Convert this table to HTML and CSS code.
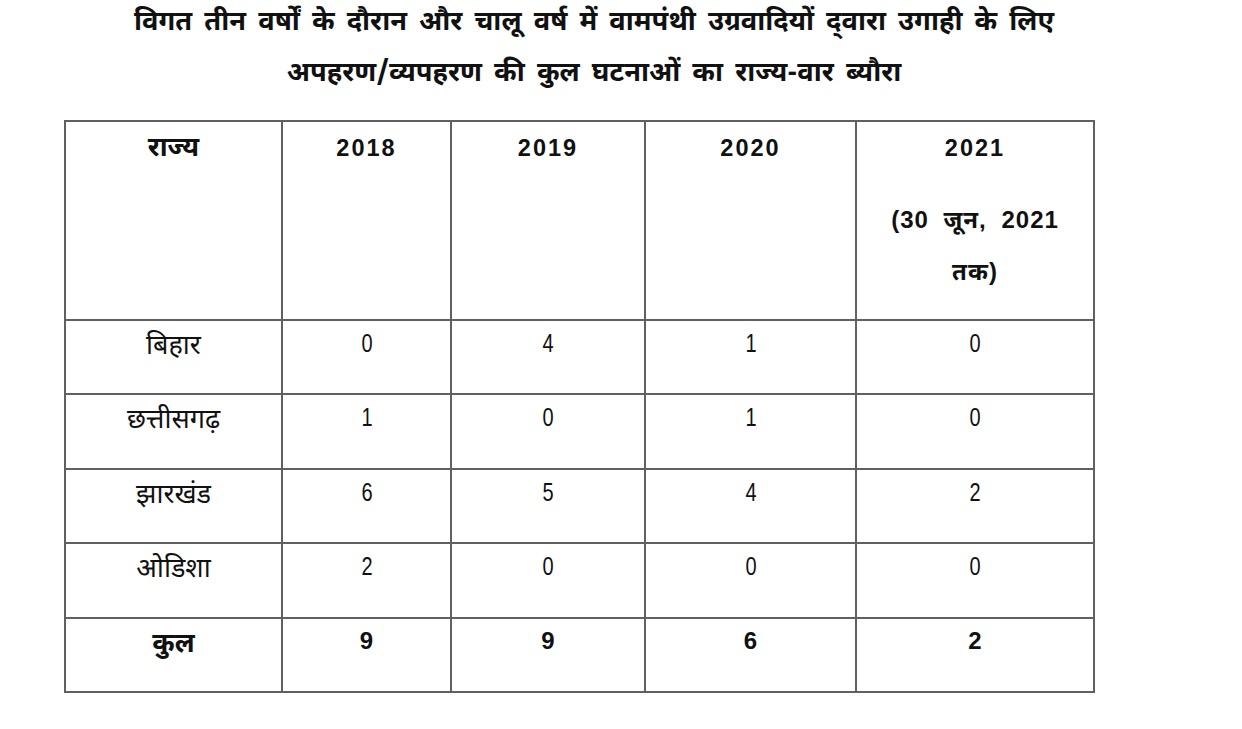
FILE: index.html
```html
<!DOCTYPE html>
<html lang="hi">
<head>
<meta charset="utf-8">
<title>राज्य-वार ब्यौरा</title>
<link rel="stylesheet" href="styles.css">
</head>
<body>
<div class="page">
  <h1 class="title">
    <span class="line">विगत तीन वर्षों के दौरान और चालू वर्ष में वामपंथी उग्रवादियों द्‌वारा उगाही के लिए</span>
    <span class="line">अपहरण/व्यपहरण की कुल घटनाओं का राज्य-वार ब्यौरा</span>
  </h1>
  <table class="data">
    <colgroup>
      <col class="c-state"><col class="c-2018"><col class="c-2019"><col class="c-2020"><col class="c-2021">
    </colgroup>
    <thead>
      <tr class="head">
        <th>राज्य</th>
        <th><span class="yr">2018</span></th>
        <th><span class="yr">2019</span></th>
        <th><span class="yr">2020</span></th>
        <th>
          <div class="yr first">2021</div>
          <div class="note">(30 जून, 2021</div>
          <div class="note">तक)</div>
        </th>
      </tr>
    </thead>
    <tbody>
      <tr><td>बिहार</td><td><span class="n">0</span></td><td><span class="n">4</span></td><td><span class="n">1</span></td><td><span class="n">0</span></td></tr>
      <tr><td>छत्तीसगढ़</td><td><span class="n">1</span></td><td><span class="n">0</span></td><td><span class="n">1</span></td><td><span class="n">0</span></td></tr>
      <tr><td>झारखंड</td><td><span class="n">6</span></td><td><span class="n">5</span></td><td><span class="n">4</span></td><td><span class="n">2</span></td></tr>
      <tr><td>ओडिशा</td><td><span class="n">2</span></td><td><span class="n">0</span></td><td><span class="n">0</span></td><td><span class="n">0</span></td></tr>
      <tr class="total"><td>कुल</td><td><span class="n">9</span></td><td><span class="n">9</span></td><td><span class="n">6</span></td><td><span class="n">2</span></td></tr>
    </tbody>
  </table>
</div>
</body>
</html>
```

FILE: styles.css
```css
html, body {
  margin: 0;
  padding: 0;
  background: #ffffff;
}

body {
  font-family: "Noto Sans Devanagari", "Lohit Devanagari", "Noto Sans", "Liberation Sans", sans-serif;
  color: #111111;
}

.page {
  padding: 0 0 0 64px;
}

.title {
  width: 1060px;
  margin: -2px 0 0 0;
  text-align: center;
  font-size: 27.3px;
  font-weight: 700;
  line-height: 51px;
  word-spacing: 5px;
}

.title .line {
  display: block;
}

.data {
  margin-top: 20px;
  border-collapse: collapse;
  width: 1029px;
  table-layout: fixed;
}

.c-state { width: 217px; }
.c-2018 { width: 169px; }
.c-2019 { width: 194px; }
.c-2020 { width: 211px; }
.c-2021 { width: 238px; }

.data th,
.data td {
  border: 2px solid #606060;
  text-align: center;
  vertical-align: top;
  padding: 0;
}

.data th {
  height: 197px;
  font-size: 27px;
  font-weight: 700;
  line-height: 52px;
}

.data th:first-child {
  line-height: 56px;
}

.data td {
  height: 72.4px;
  font-size: 27px;
  font-weight: 400;
  line-height: 44px;
}

.data td:first-child {
  line-height: 54px;
}

.yr {
  font-family: "Liberation Sans", Arial, sans-serif;
  font-size: 23.5px;
  letter-spacing: 2px;
}

.first {
  margin-bottom: 20px;
}

.note {
  font-family: "Liberation Sans", Arial, "Noto Sans Devanagari", "Lohit Devanagari", sans-serif;
  font-size: 24px;
  line-height: 52px;
  letter-spacing: 1px;
  word-spacing: 7px;
}

.n {
  display: inline-block;
  font-family: "Liberation Sans", Arial, sans-serif;
  font-size: 25px;
  transform: scaleX(0.8);
}

.total td {
  font-weight: 700;
}

.total .n {
  font-size: 24px;
  transform: none;
}
```
